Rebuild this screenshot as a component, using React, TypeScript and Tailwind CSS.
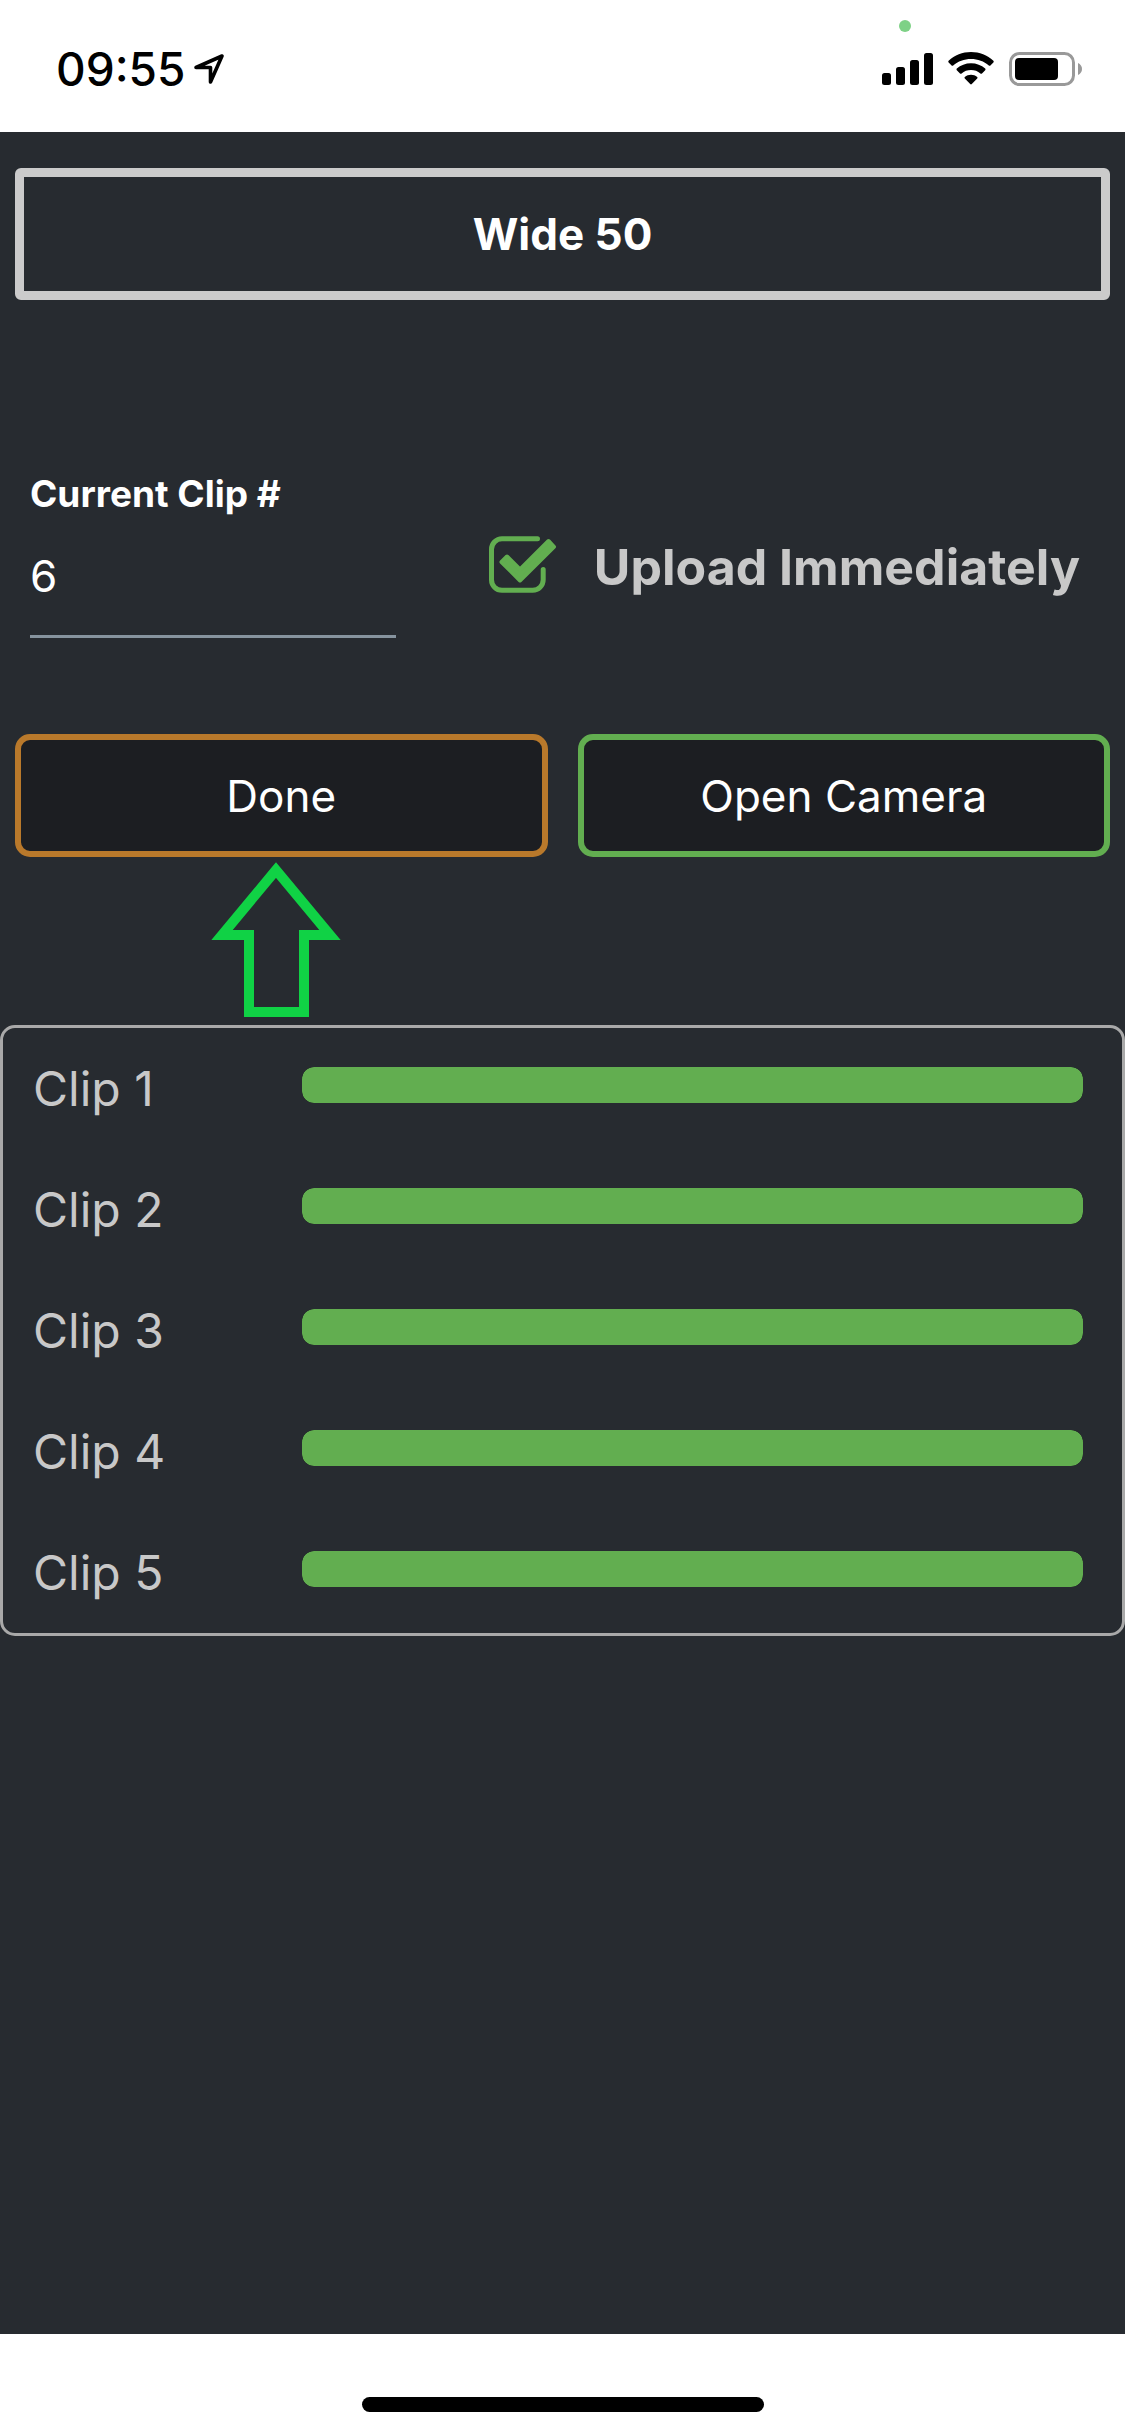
import React from 'react';

const clips = [
  { id: 1, progress: 100 },
  { id: 2, progress: 100 },
  { id: 3, progress: 100 },
  { id: 4, progress: 100 },
  { id: 5, progress: 100 },
];

const StatusBar = () => {
  return (
    <header className="relative h-[132px] shrink-0 bg-white text-black flex items-center justify-between pl-14 pr-[42px] pt-1.5">
      {/* Time and location */}
      <div className="flex items-center gap-2">
        <span className="text-[46px] leading-[56px] font-medium">09:55</span>
        <svg width="30" height="30" viewBox="0 0 30 30" fill="none" stroke="currentColor" strokeWidth="3.6" strokeLinejoin="round">
          <path d="M2 13.5 28 2 16.5 28V13.5Z" />
        </svg>
      </div>

      {/* Signal, wifi and battery */}
      <div className="flex items-center">
        <svg width="52" height="34" viewBox="0 0 52 34" fill="currentColor">
          <rect x="0" y="21" width="9" height="12" rx="2.5" />
          <rect x="14" y="15" width="9" height="18" rx="2.5" />
          <rect x="28" y="8" width="9" height="25" rx="2.5" />
          <rect x="42" y="1" width="9" height="32" rx="2.5" />
        </svg>
        <svg className="ml-3.5" width="46" height="34" viewBox="0 0 46 34" fill="currentColor">
          <path d="M23 0C14.5 0 6.6 3.3.6 8.8c-.5.5-.5 1.1 0 1.6l3 3c.5.5 1.1.5 1.6 0C10 9.3 16.2 7 23 7s13 2.3 17.8 6.4c.5.5 1.1.5 1.6 0l3-3c.5-.5.5-1.1 0-1.6C39.4 3.3 31.5 0 23 0Z" />
          <path d="M23 11.3c-5.4 0-10.4 2-14.2 5.3-.5.5-.5 1.1 0 1.6l3.2 3.2c.5.5 1.1.5 1.6 0 2.6-2.1 5.8-3.3 9.4-3.3s6.8 1.2 9.4 3.3c.5.5 1.1.5 1.6 0l3.2-3.2c.5-.5.5-1.1 0-1.6-3.8-3.3-8.8-5.3-14.2-5.3Z" />
          <path d="M23 22.7c-2.3 0-4.5.8-6.2 2.2-.5.5-.5 1.1 0 1.6l5.4 5.5c.5.5 1.1.5 1.6 0l5.4-5.5c.5-.5.5-1.1 0-1.6-1.7-1.4-3.9-2.2-6.2-2.2Z" />
        </svg>
        <svg className="ml-[15px]" width="74" height="34" viewBox="0 0 74 34">
          <rect x="1.5" y="1.5" width="63" height="31" rx="9" fill="none" stroke="#999" strokeWidth="3" />
          <rect x="6" y="6" width="43" height="22" rx="4" />
          <path d="M69 11c2.5 1 4 3.4 4 6s-1.5 5-4 6Z" fill="#999" />
        </svg>
      </div>

      {/* Camera in use */}
      <span className="absolute right-[214px] top-5 size-3 rounded-full bg-[#7ed186]" />
    </header>
  );
};

const CheckIcon = () => {
  return (
    <svg width="68" height="58" viewBox="0 0 68 58" className="mb-1 text-[#62ae50]" fill="none" stroke="currentColor">
      <path d="M48.5 2.8H13A10.5 10.5 0 0 0 2.5 13.3V43.7A10.5 10.5 0 0 0 13 54.3H43.6A10.5 10.5 0 0 0 54.2 43.7V33.5" strokeWidth="5" strokeLinecap="round" />
      <path d="M12.5 26 18 20.5 31 33.5 59.5 5 65 10.8 31 44.5Z" fill="currentColor" strokeWidth="4" strokeLinejoin="round" />
    </svg>
  );
};

const ClipRow = ({ id, progress }: { id: number; progress: number }) => {
  return (
    <li className="flex h-[121px] items-start pl-[30px] pr-[39px] pt-[30px]">
      <span className="w-[269px] shrink-0 text-[48px] leading-[62px]">Clip {id}</span>
      <div className="mt-[9px] h-9 flex-1 overflow-hidden rounded-xl bg-[#1c1e22]" role="progressbar" aria-label={`Clip ${id}`} aria-valuenow={progress}>
        <div className="h-full rounded-xl bg-[#62ae50]" style={{ width: `${progress}%` }} />
      </div>
    </li>
  );
};

const App = () => {
  return (
    <div className="flex min-h-screen flex-col bg-[#272b30] font-['Inter','Liberation_Sans',sans-serif]">
      <StatusBar />

      <main className="flex-1 text-[#c8c8c8]">
        <h1 className="mx-[15px] mt-9 rounded-md border-[9px] border-[#cbcbcb] py-[30px] text-center text-[44px] leading-[54px] font-bold text-white">
          Wide 50
        </h1>

        {/* Clip number and upload option */}
        <div className="mt-[170px] flex items-start justify-between pl-[30px] pr-[45px]">
          <div className="flex w-[366px] flex-col">
            <label htmlFor="clip" className="text-[37px] leading-[48px] font-bold text-white">
              Current Clip #
            </label>
            <input
              id="clip"
              type="text"
              inputMode="numeric"
              defaultValue="6"
              className="h-[120px] w-full border-b-[3px] border-[#86939e] bg-transparent pb-0.5 text-[44px] text-white outline-none"
            />
          </div>
          <label className="mt-[62px] flex items-center gap-[37px]">
            <input type="checkbox" defaultChecked className="peer sr-only" />
            <CheckIcon />
            <span className="text-[50px] leading-[70px] font-bold">Upload Immediately</span>
          </label>
        </div>

        {/* Actions */}
        <div className="relative mt-24 grid grid-cols-2 gap-[30px] px-[15px] text-[44px] leading-[55px] text-white">
          <button type="button" className="rounded-[15px] border-[6px] border-[#b9792b] bg-[#1c1e22] pt-[29px] pb-[27px]">
            Done
          </button>
          <button type="button" className="rounded-[15px] border-[6px] border-[#62ae50] bg-[#1c1e22] pt-[29px] pb-[27px]">
            Open Camera
          </button>
          <svg className="absolute left-[211px] top-[128px]" width="131" height="156" viewBox="0 0 131 156" fill="none" stroke="#10d245" strokeWidth="10">
            <path d="M65 8 11 73H38V150H93V73H119Z" />
          </svg>
        </div>

        <ul className="mt-[168px] rounded-[15px] border-[3px] border-[#a9a9a9]">
          {clips.map((clip) => (
            <ClipRow key={clip.id} {...clip} />
          ))}
        </ul>
      </main>

      {/* Home indicator */}
      <footer className="flex h-[102px] shrink-0 items-end justify-center bg-white pb-6">
        <div className="h-[15px] w-[402px] rounded-full bg-black" />
      </footer>
    </div>
  );
};

export default App;
